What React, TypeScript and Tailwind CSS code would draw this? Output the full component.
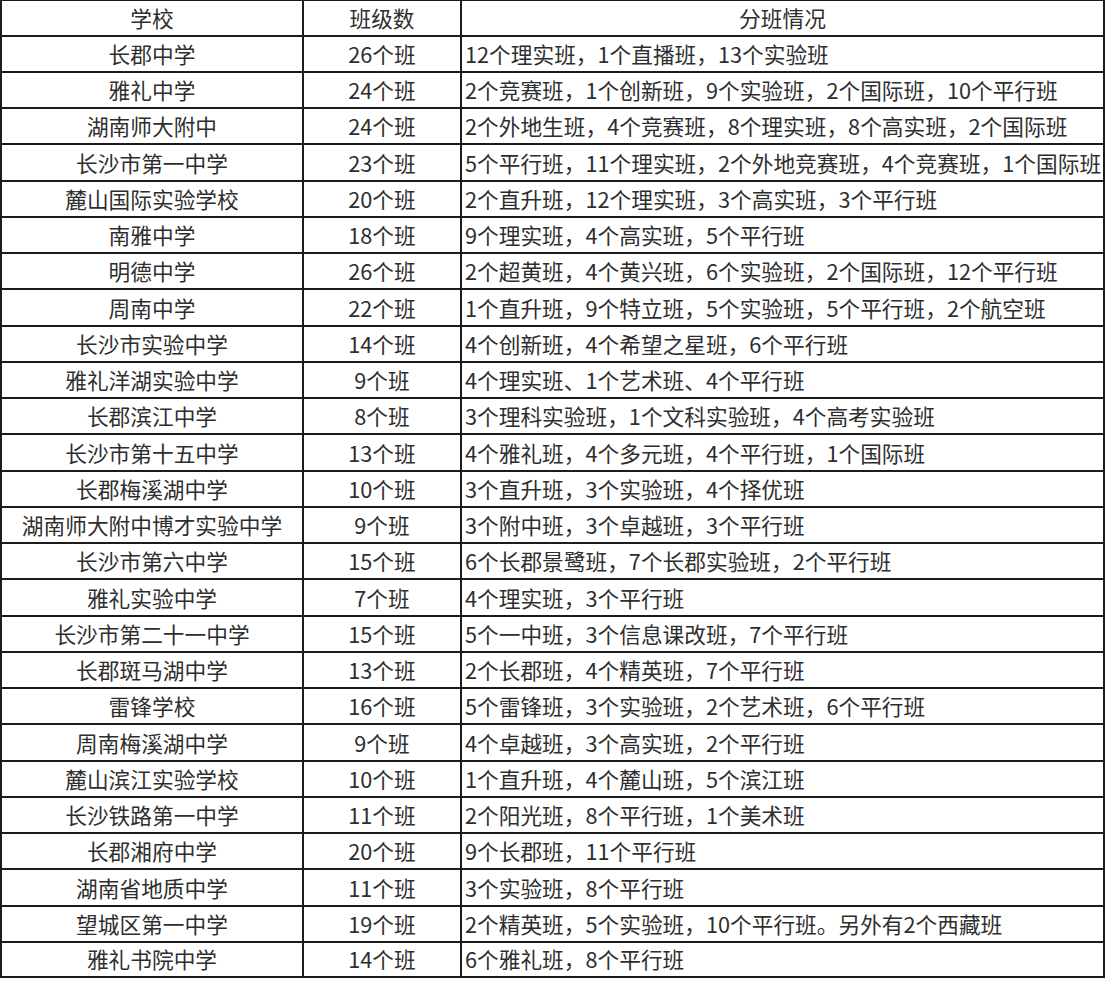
import React from 'react';

// 长沙各校分班情况表
const rows: [string, string, string][] = [
  ['长郡中学', '26个班', '12个理实班，1个直播班，13个实验班'],
  ['雅礼中学', '24个班', '2个竞赛班，1个创新班，9个实验班，2个国际班，10个平行班'],
  ['湖南师大附中', '24个班', '2个外地生班，4个竞赛班，8个理实班，8个高实班，2个国际班'],
  ['长沙市第一中学', '23个班', '5个平行班，11个理实班，2个外地竞赛班，4个竞赛班，1个国际班'],
  ['麓山国际实验学校', '20个班', '2个直升班，12个理实班，3个高实班，3个平行班'],
  ['南雅中学', '18个班', '9个理实班，4个高实班，5个平行班'],
  ['明德中学', '26个班', '2个超黄班，4个黄兴班，6个实验班，2个国际班，12个平行班'],
  ['周南中学', '22个班', '1个直升班，9个特立班，5个实验班，5个平行班，2个航空班'],
  ['长沙市实验中学', '14个班', '4个创新班，4个希望之星班，6个平行班'],
  ['雅礼洋湖实验中学', '9个班', '4个理实班、1个艺术班、4个平行班'],
  ['长郡滨江中学', '8个班', '3个理科实验班，1个文科实验班，4个高考实验班'],
  ['长沙市第十五中学', '13个班', '4个雅礼班，4个多元班，4个平行班，1个国际班'],
  ['长郡梅溪湖中学', '10个班', '3个直升班，3个实验班，4个择优班'],
  ['湖南师大附中博才实验中学', '9个班', '3个附中班，3个卓越班，3个平行班'],
  ['长沙市第六中学', '15个班', '6个长郡景鹭班，7个长郡实验班，2个平行班'],
  ['雅礼实验中学', '7个班', '4个理实班，3个平行班'],
  ['长沙市第二十一中学', '15个班', '5个一中班，3个信息课改班，7个平行班'],
  ['长郡斑马湖中学', '13个班', '2个长郡班，4个精英班，7个平行班'],
  ['雷锋学校', '16个班', '5个雷锋班，3个实验班，2个艺术班，6个平行班'],
  ['周南梅溪湖中学', '9个班', '4个卓越班，3个高实班，2个平行班'],
  ['麓山滨江实验学校', '10个班', '1个直升班，4个麓山班，5个滨江班'],
  ['长沙铁路第一中学', '11个班', '2个阳光班，8个平行班，1个美术班'],
  ['长郡湘府中学', '20个班', '9个长郡班，11个平行班'],
  ['湖南省地质中学', '11个班', '3个实验班，8个平行班'],
  ['望城区第一中学', '19个班', '2个精英班，5个实验班，10个平行班。另外有2个西藏班'],
  ['雅礼书院中学', '14个班', '6个雅礼班，8个平行班'],
];

function Row({ cells, last }: { cells: [string, string, string]; last?: boolean }) {
  return (
    <div
      className={
        'flex ' + (last ? 'h-[35px] border-b-2' : 'h-[36.26px] border-b-2') + ' border-[#1c1c1c]'
      }
    >
      <div className="w-[302px] flex items-center justify-center border-r-2 border-[#1c1c1c] whitespace-nowrap">
        {cells[0]}
      </div>
      <div className="w-[158px] flex items-center justify-center border-r-2 border-[#1c1c1c] whitespace-nowrap">
        {cells[1]}
      </div>
      <div className="flex-1 flex items-center pl-[3px] whitespace-nowrap overflow-hidden">{cells[2]}</div>
    </div>
  );
}

export default function App() {
  return (
    <div className="w-[1112px] h-[982px] bg-white">
      <div
        className="w-[1105px] border-l-2 border-r-2 border-t border-[#1c1c1c] text-[21.7px] leading-none text-[#2e2e2e]"
        style={{ fontFamily: '"Noto Sans CJK SC", "Noto Sans", sans-serif' }}
      >
        <div className="flex h-[35.5px] border-b-2 border-[#1c1c1c]">
          <div className="w-[302px] flex items-center justify-center border-r-2 border-[#1c1c1c]">学校</div>
          <div className="w-[158px] flex items-center justify-center border-r-2 border-[#1c1c1c]">班级数</div>
          <div className="flex-1 flex items-center justify-center">分班情况</div>
        </div>
        {rows.map((r, i) => (
          <Row key={r[0]} cells={r} last={i === rows.length - 1} />
        ))}
      </div>
    </div>
  );
}
